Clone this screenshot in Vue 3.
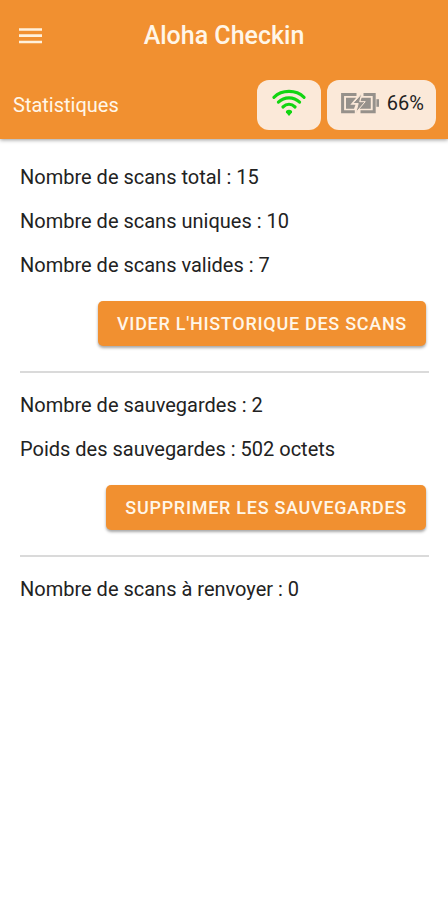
<script setup>
import { ref, computed } from 'vue'

const scans = ref({ total: 15, uniques: 10, valides: 7, renvoyer: 0 })
const saves = ref({ count: 2, bytes: 502 })
const battery = ref(66)

const scanLines = computed(() => [
  `Nombre de scans total : ${scans.value.total}`,
  `Nombre de scans uniques : ${scans.value.uniques}`,
  `Nombre de scans valides : ${scans.value.valides}`,
])
const saveLines = computed(() => [
  `Nombre de sauvegardes : ${saves.value.count}`,
  `Poids des sauvegardes : ${saves.value.bytes} octets`,
])

function clearScans() {
  scans.value = { ...scans.value, total: 0, uniques: 0, valides: 0 }
}
function clearSaves() {
  saves.value = { count: 0, bytes: 0 }
}
</script>

<template>
  <div class="page">
    <header class="header">
      <div class="bar">
        <button class="menu" type="button" aria-label="Menu">
          <svg width="24" height="18" viewBox="0 0 24 18" aria-hidden="true">
            <path d="M1 2.5h23M1 8.7h23M1 15h23" stroke="#fff1dc" stroke-width="2.7" />
          </svg>
        </button>
        <h1 class="title">Aloha Checkin</h1>
      </div>
      <div class="status">
        <h2 class="section">Statistiques</h2>
        <div class="chip">
          <svg width="36" height="30" viewBox="0 0 36 30" aria-hidden="true">
            <g fill="none" stroke="#12d512" stroke-width="3.1" stroke-linecap="round">
              <path d="M2.9 9.3C11 1.4 25 1.4 33.1 9.3" />
              <path d="M7.4 14.2C13.4 8.4 22.6 8.4 28.6 14.2" />
              <path d="M11.9 19C15.6 15.5 20.4 15.5 24.1 19" />
            </g>
            <path d="M18 28l-3-3.6c-1.4-3.6 7.4-3.6 6 0z" fill="#12d512" />
          </svg>
        </div>
        <div class="chip battery">
          <svg width="38" height="22" viewBox="0 0 38 22" aria-hidden="true">
            <path
              d="M15.5 2.4H1.6v17.4h12.2M19.5 19.8h13.7V2.4H22.5"
              fill="none" stroke="#96918b" stroke-width="3"
            />
            <path d="M5 5.7h10.2l-5.9 7h5.2l-1.5 4H5zM20.6 5.7H29.8v11H18l6.5-7.2h-5.2z" fill="#96918b" />
            <path d="M20.8 1.5l-9 10h5.4l-2.4 9.2 9.4-11h-5.5z" fill="#96918b" stroke="#fbe9d9" stroke-width="1" />
            <path d="M35.4 7.2H38v7.6h-2.6z" fill="#96918b" />
          </svg>
          <span>{{ battery }}%</span>
        </div>
      </div>
    </header>

    <main class="content">
      <section class="group">
        <p v-for="line in scanLines" :key="line">{{ line }}</p>
        <button class="action" type="button" @click="clearScans">Vider l'historique des scans</button>
      </section>
      <section class="group">
        <p v-for="line in saveLines" :key="line">{{ line }}</p>
        <button class="action" type="button" @click="clearSaves">Supprimer les sauvegardes</button>
      </section>
      <section class="group">
        <p>Nombre de scans à renvoyer : {{ scans.renvoyer }}</p>
      </section>
    </main>
  </div>
</template>

<style>
body {
  background: #fff;
}
</style>

<style scoped>
.page {
  min-height: 100vh;
  background: #fff;
  color: #222;
  font-family: Roboto, "Liberation Sans", sans-serif;
  font-size: 20px;
  line-height: 24px;
}
.header {
  padding-bottom: 9px;
  background: #f19030;
  color: #fff6e8;
  box-shadow: 0 1px 4px rgba(0, 0, 0, 0.4);
}
.bar {
  display: grid;
  grid-template-columns: 48px 1fr 48px;
  align-items: center;
  height: 72px;
  padding: 0 6px;
}
.menu {
  display: flex;
  align-items: center;
  justify-content: center;
  height: 48px;
  padding: 0;
  border: 0;
  background: none;
}
.title {
  margin: 0;
  text-align: center;
  font-size: 25px;
  font-weight: 500;
}
.status {
  display: flex;
  align-items: center;
  gap: 6px;
  padding: 8px 12px 0 13px;
}
.section {
  flex: 1;
  margin: 0;
  font-size: 20px;
  font-weight: 400;
}
.chip {
  display: flex;
  align-items: center;
  gap: 8px;
  height: 50px;
  padding: 0 14px 4px;
  border-radius: 12px;
  background: #fbe9d9;
  color: #222;
  box-sizing: border-box;
}
.battery {
  padding-right: 12px;
}
.content {
  padding: 26px 19px 24px 20px;
}
.group {
  display: flex;
  flex-direction: column;
  gap: 20px;
}
.group + .group {
  margin-top: 25px;
  padding-top: 20px;
  border-top: 2px solid #dadada;
}
.group p {
  margin: 0;
}
.action {
  align-self: flex-end;
  height: 45px;
  margin: 4px 3px 0 0;
  padding: 0 19px;
  border: 0;
  border-radius: 5px;
  background: #f19030;
  color: #fff6e8;
  font: 500 18px/24px Roboto, "Liberation Sans", sans-serif;
  letter-spacing: 0.04em;
  text-transform: uppercase;
  box-shadow: 0 2px 3px rgba(0, 0, 0, 0.35);
}
</style>
